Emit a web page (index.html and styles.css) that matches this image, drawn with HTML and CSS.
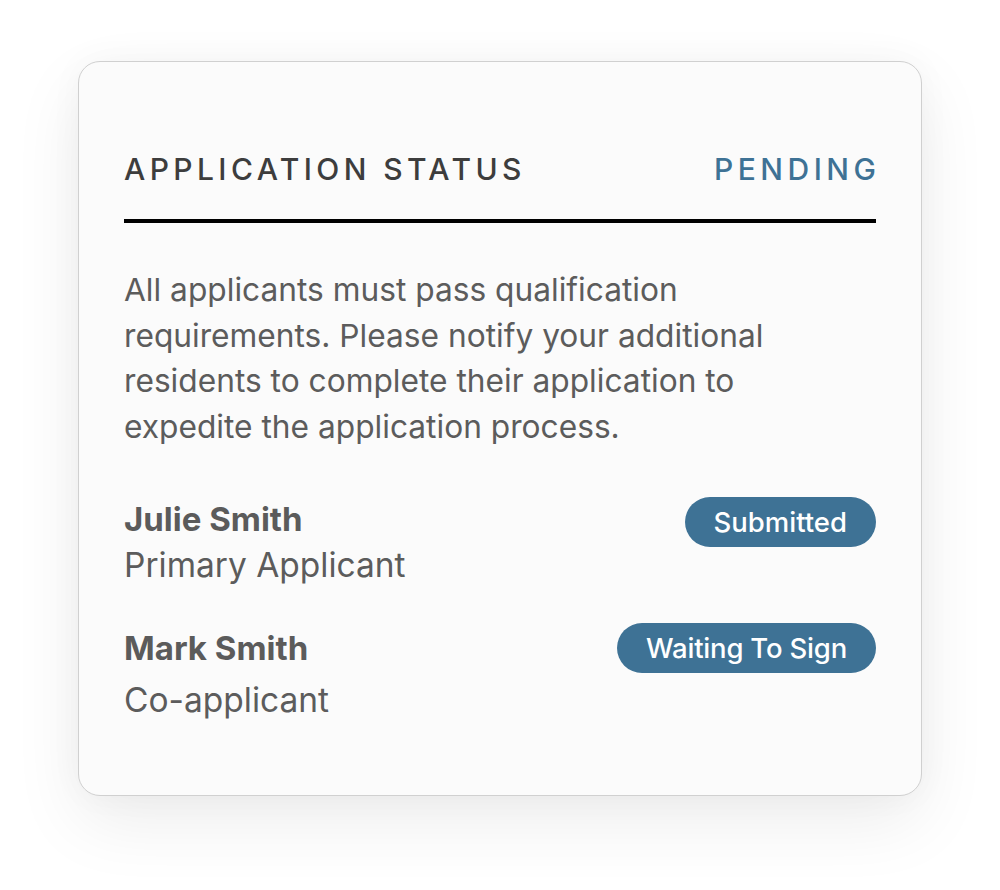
FILE: index.html
```html
<!DOCTYPE html>
<html lang="en">
<head>
<meta charset="utf-8">
<title>Application Status</title>
<link rel="stylesheet" href="styles.css">
</head>
<body>
<main class="page">
  <section class="card">
    <header class="card-header">
      <h2 class="title">APPLICATION STATUS</h2>
      <span class="status">PENDING</span>
    </header>
    <p class="intro">All applicants must pass qualification requirements. Please notify your additional residents to complete their application to expedite the application process.</p>
    <ul class="applicants">
      <li class="applicant">
        <div class="who">
          <div class="name">Julie Smith</div>
          <div class="role">Primary Applicant</div>
        </div>
        <span class="badge">Submitted</span>
      </li>
      <li class="applicant">
        <div class="who">
          <div class="name">Mark Smith</div>
          <div class="role role-spaced">Co-applicant</div>
        </div>
        <span class="badge badge-raised">Waiting To Sign</span>
      </li>
    </ul>
  </section>
</main>
</body>
</html>
```
FILE: styles.css
```css
* { box-sizing: border-box; }
html, body { margin: 0; padding: 0; background: #ffffff; }
body {
  font-family: "Inter", "Liberation Sans", sans-serif;
  color: #5a5a5a;
}
.page {
  display: flex;
  justify-content: center;
  padding: 61px 0 94px 0;
  min-height: 890px;
}
.card {
  width: 844px;
  height: 735px;
  background: #fbfbfb;
  border: 1px solid #d0d0d0;
  border-radius: 22px;
  box-shadow: 0 26px 70px rgba(0, 0, 0, 0.075), 0 0 34px rgba(0, 0, 0, 0.035);
  padding: 89px 45px 0 45px;
}
.card-header {
  display: flex;
  justify-content: space-between;
  align-items: baseline;
  border-bottom: 4px solid #000;
  padding-bottom: 32px;
}
.title {
  margin: 0;
  font-size: 30px;
  font-weight: 500;
  letter-spacing: 4.4px;
  color: #3d3d3d;
  line-height: 36px;
}
.status {
  font-size: 30px;
  font-weight: 500;
  letter-spacing: 4.5px;
  color: #3e7295;
  margin-right: -4.5px;
  line-height: 36px;
}
.intro {
  margin: 44px 0 0 0;
  font-size: 31.7px;
  line-height: 45.7px;
  color: #5c5c5c;
  font-weight: 400;
  max-width: 680px;
}
.applicants {
  list-style: none;
  margin: 46px 0 0 0;
  padding: 0;
  display: flex;
  flex-direction: column;
  gap: 37px;
}
.applicant {
  display: flex;
  justify-content: space-between;
  align-items: flex-start;
}
.name {
  font-size: 33px;
  font-weight: 700;
  color: #5b5b5b;
  line-height: 46px;
}
.role {
  font-size: 33.5px;
  font-weight: 400;
  color: #5c5c5c;
  line-height: 46px;
}
.role-spaced {
  margin-top: 6px;
}
.badge {
  background: #3e7295;
  color: #ffffff;
  font-size: 27.5px;
  font-weight: 500;
  border-radius: 999px;
  padding: 0 29px;
  height: 50px;
  line-height: 50px;
  margin-top: 1px;
}
.badge-raised {
  margin-top: -2px;
  letter-spacing: -0.2px;
}
```
